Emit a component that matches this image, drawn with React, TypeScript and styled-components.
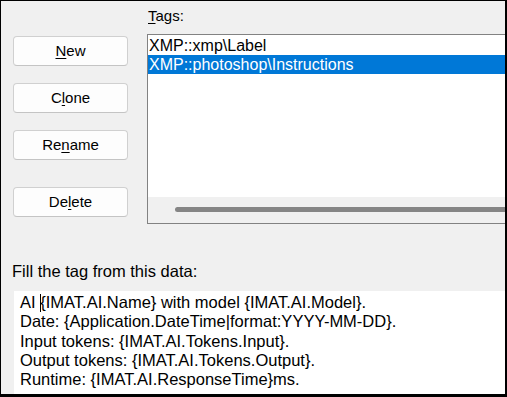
import React from 'react'
import styled, { createGlobalStyle } from 'styled-components'

const GlobalStyle = createGlobalStyle`
  html, body {
    margin: 0;
    padding: 0;
  }
  body {
    background: #f0f0f0;
    font-family: 'Liberation Sans', Arial, sans-serif;
  }
  * {
    box-sizing: border-box;
  }
`

const Window = styled.div`
  width: 507px;
  height: 397px;
  display: flex;
  flex-direction: column;
  background: #f0f0f0;
  color: #000;
  border-style: solid;
  border-color: #000;
  border-width: 1px 2px 3px 1px;
  overflow: hidden;
`

const TopArea = styled.div`
  display: flex;
  gap: 19px;
  padding-left: 12px;
`

const ButtonColumn = styled.div`
  display: flex;
  flex-direction: column;
  gap: 17px;
  width: 115px;
  flex-shrink: 0;
  padding-top: 35px;
`

const ActionButton = styled.button<{ $spaced?: boolean }>`
  height: 30px;
  margin-top: ${({ $spaced }) => ($spaced ? '10px' : '0')};
  display: flex;
  align-items: center;
  justify-content: center;
  padding: 0;
  background: #fdfdfd;
  border: 1px solid #d0d0d0;
  border-bottom-color: #c4c4c4;
  border-radius: 4px;
  font-family: 'Liberation Sans', Arial, sans-serif;
  font-size: 15px;
  line-height: 18px;
  color: #000;
  cursor: default;
`

const Mnemonic = styled.span`
  text-decoration: underline;
  text-underline-offset: 2px;
  text-decoration-thickness: 1px;
`

const TagsPanel = styled.div`
  flex: 1;
  min-width: 0;
  margin-right: -40px;
  padding-top: 6px;
  display: flex;
  flex-direction: column;
`

const TagsLabel = styled.div`
  font-size: 15px;
  line-height: 18px;
  padding-left: 1px;
  margin-bottom: 9px;
`

const TagList = styled.div`
  height: 190px;
  display: flex;
  flex-direction: column;
  background: #fff;
  border: 1px solid #828282;
`

const TagItems = styled.div`
  flex: 1;
  padding-top: 1px;
`

const TagItem = styled.div<{ $selected?: boolean }>`
  height: 19px;
  line-height: 19px;
  font-size: 16px;
  padding-left: 1px;
  white-space: nowrap;
  background: ${({ $selected }) => ($selected ? '#0078d7' : 'transparent')};
  color: ${({ $selected }) => ($selected ? '#fff' : '#000')};
`

const ScrollTrack = styled.div`
  height: 26px;
  background: #f0f0f0;
  padding: 10px 0 0 27px;
`

const ScrollThumb = styled.div`
  height: 5px;
  border-radius: 3px;
  background: #858585;
`

const BottomArea = styled.div`
  flex: 1;
  min-height: 0;
  display: flex;
  flex-direction: column;
  padding: 38px 0 0 11px;
`

const FieldLabel = styled.div`
  font-size: 16.5px;
  line-height: 19px;
  margin-bottom: 10px;
`

const Editor = styled.div`
  flex: 1;
  margin: 0 -10px 0 2px;
  padding: 2px 6px;
  background: #fff;
  font-size: 16.5px;
  line-height: 19.3px;
  white-space: pre;
  overflow: hidden;
`

const Caret = styled.span`
  display: inline-block;
  width: 1px;
  height: 18px;
  margin-right: -1px;
  vertical-align: -4px;
  background: #000;
`

const tags = ['XMP::xmp\\Label', 'XMP::photoshop\\Instructions']

export default function App() {
  return (
    <>
      <GlobalStyle />
      <Window>
        <TopArea>
          <ButtonColumn>
            <ActionButton>
              <span>
                <Mnemonic>N</Mnemonic>ew
              </span>
            </ActionButton>
            <ActionButton>
              <span>
                C<Mnemonic>l</Mnemonic>one
              </span>
            </ActionButton>
            <ActionButton>
              <span>
                Re<Mnemonic>n</Mnemonic>ame
              </span>
            </ActionButton>
            <ActionButton $spaced>
              <span>
                De<Mnemonic>l</Mnemonic>ete
              </span>
            </ActionButton>
          </ButtonColumn>
          <TagsPanel>
            <TagsLabel>
              <Mnemonic>T</Mnemonic>ags:
            </TagsLabel>
            <TagList>
              <TagItems>
                {tags.map((tag, i) => (
                  <TagItem key={tag} $selected={i === 1}>
                    {tag}
                  </TagItem>
                ))}
              </TagItems>
              <ScrollTrack>
                <ScrollThumb />
              </ScrollTrack>
            </TagList>
          </TagsPanel>
        </TopArea>
        <BottomArea>
          <FieldLabel>Fill the tag from this data:</FieldLabel>
          <Editor>
            {'AI '}
            <Caret />
            {'{IMAT.AI.Name} with model {IMAT.AI.Model}.\n'}
            {'Date: {Application.DateTime|format:YYYY-MM-DD}.\n'}
            {'Input tokens: {IMAT.AI.Tokens.Input}.\n'}
            {'Output tokens: {IMAT.AI.Tokens.Output}.\n'}
            {'Runtime: {IMAT.AI.ResponseTime}ms.'}
          </Editor>
        </BottomArea>
      </Window>
    </>
  )
}
